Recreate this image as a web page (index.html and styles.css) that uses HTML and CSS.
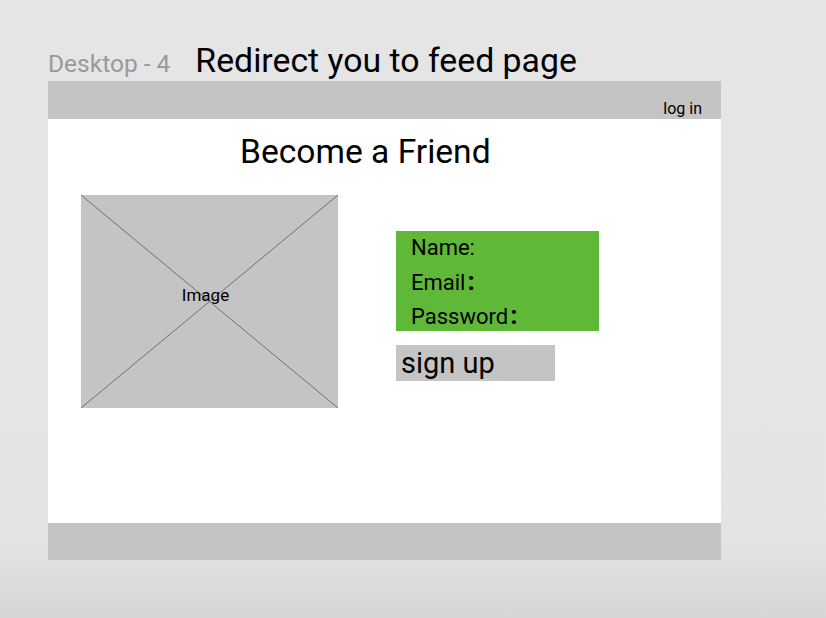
FILE: index.html
```html
<!DOCTYPE html>
<html>
<head>
<meta charset="utf-8">
<link rel="stylesheet" href="styles.css">
</head>
<body>
<div class="canvas">
  <div class="heading">
    <span class="frame-name">Desktop - 4</span>
    <span class="frame-note">Redirect you to feed page</span>
  </div>
  <div class="frame">
    <div class="topbar"><span class="login">log in</span></div>
    <div class="content">
      <h1 class="title">Become a Friend</h1>
      <div class="row">
        <div class="image">
          <svg class="cross" viewBox="0 0 100 100" preserveAspectRatio="none">
            <line x1="0" y1="0" x2="100" y2="100" vector-effect="non-scaling-stroke"/>
            <line x1="100" y1="0" x2="0" y2="100" vector-effect="non-scaling-stroke"/>
          </svg>
          <span class="image-label">Image</span>
        </div>
        <div class="form-col">
          <div class="fields">
            <div class="field">Name:</div>
            <div class="field">Email<span class="colon">:</span></div>
            <div class="field">Password<span class="colon">:</span></div>
          </div>
          <div class="signup">sign up</div>
        </div>
      </div>
    </div>
    <div class="footer"></div>
  </div>
</div>
</body>
</html>
```

FILE: styles.css
```css
* { box-sizing: border-box; }
html, body {
  margin: 0;
  padding: 0;
}
body {
  width: 826px;
  height: 618px;
  overflow: hidden;
  font-family: Roboto, "Liberation Sans", sans-serif;
  background: linear-gradient(to bottom, #e5e5e5 0px, #e4e4e4 540px, #d6d6d6 618px);
}
.canvas {
  padding-left: 48px;
}
.heading {
  height: 81px;
  display: flex;
  align-items: baseline;
  gap: 25px;
  padding-top: 47px;
}
.frame-name {
  font-size: 24.5px;
  color: #999999;
  line-height: 28px;
}
.frame-note {
  font-size: 33.8px;
  color: #000;
  line-height: 28px;
}
.frame {
  width: 673px;
  background: #ffffff;
}
.topbar {
  height: 38px;
  background: #c4c4c4;
  display: flex;
  justify-content: flex-end;
  align-items: flex-end;
  padding-right: 19px;
  padding-bottom: 0;
}
.login {
  font-size: 16px;
  line-height: 20px;
}
.content {
  height: 404px;
  padding-left: 33px;
  padding-top: 15px;
}
.title {
  margin: 0 0 0 159px;
  font-size: 33.6px;
  font-weight: 400;
  line-height: 36px;
}
.row {
  display: flex;
  margin-top: 25px;
}
.image {
  position: relative;
  width: 257px;
  height: 213px;
  background: #c4c4c4;
  display: flex;
  align-items: center;
  justify-content: center;
}
.cross {
  position: absolute;
  inset: 0;
  width: 100%;
  height: 100%;
}
.cross line {
  stroke: #5a5a5a;
  stroke-width: 0.8;
}
.image-label {
  position: relative;
  font-size: 17px;
  margin-left: -8px;
  margin-top: -14px;
}
.form-col {
  margin-left: 58px;
  margin-top: 36px;
  display: flex;
  flex-direction: column;
}
.fields {
  width: 203px;
  height: 100px;
  background: #5fb838;
  padding: 1px 0 0 15px;
  display: flex;
  flex-direction: column;
}
.field {
  font-size: 22px;
  line-height: 34px;
  height: 34px;
}
.field:first-child { height: 32px; line-height: 32px; }
.colon {
  font-size: 26px;
  font-weight: 700;
  margin-left: 2px;
}
.signup {
  margin-top: 14px;
  width: 159px;
  height: 36px;
  background: #c4c4c4;
  font-size: 29px;
  line-height: 36px;
  padding-left: 5px;
}
.footer {
  height: 37px;
  background: #c4c4c4;
}
```
